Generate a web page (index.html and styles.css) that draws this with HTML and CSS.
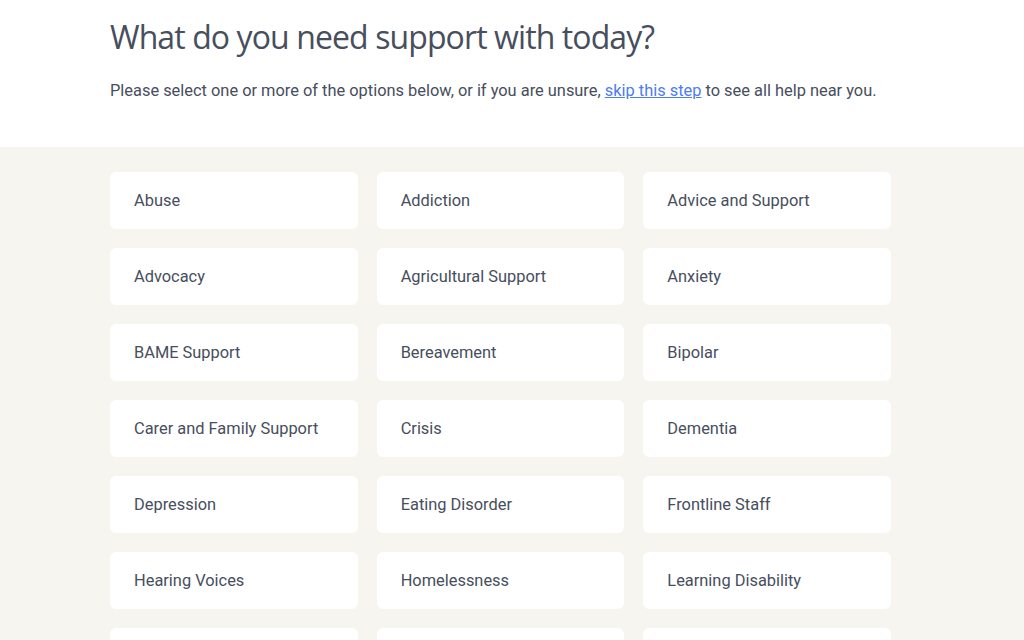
FILE: index.html
```html
<!DOCTYPE html>
<html lang="en">
<head>
  <meta charset="UTF-8">
  <meta name="viewport" content="width=device-width, initial-scale=1.0">
  <title>What do you need support with today?</title>
  <link rel="stylesheet" href="styles.css">
</head>
<body>
  <header class="intro">
    <div class="wrap">
      <h1>What do you need support with today?</h1>
      <p>Please select one or more of the options below, or if you are unsure, <a href="#">skip this step</a> to see all help near you.</p>
    </div>
  </header>
  <main class="options">
    <div class="wrap grid">
      <button class="option">Abuse</button>
      <button class="option">Addiction</button>
      <button class="option">Advice and Support</button>
      <button class="option">Advocacy</button>
      <button class="option">Agricultural Support</button>
      <button class="option">Anxiety</button>
      <button class="option">BAME Support</button>
      <button class="option">Bereavement</button>
      <button class="option">Bipolar</button>
      <button class="option">Carer and Family Support</button>
      <button class="option">Crisis</button>
      <button class="option">Dementia</button>
      <button class="option">Depression</button>
      <button class="option">Eating Disorder</button>
      <button class="option">Frontline Staff</button>
      <button class="option">Hearing Voices</button>
      <button class="option">Homelessness</button>
      <button class="option">Learning Disability</button>
      <button class="option">Loneliness</button>
      <button class="option">LGBTQ+</button>
      <button class="option">Mental Health</button>
    </div>
  </main>
</body>
</html>
```

FILE: styles.css
```css
body {
  margin: 0;
  font-family: Roboto, "Liberation Sans", sans-serif;
  color: #474e5d;
  background-color: #f7f5f0;
}

.wrap {
  width: 781px;
  margin-left: 110px;
}

.intro {
  background-color: #fff;
  padding: 14px 0 44px;
}

h1 {
  margin: 0;
  font-family: "Open Sans", sans-serif;
  font-weight: 400;
  font-size: 32px;
  line-height: 46px;
  letter-spacing: -0.9px;
  color: #474e5d;
}

.intro p {
  margin: 19px 0 0;
  font-size: 16.4px;
  line-height: 24px;
}

.intro a {
  color: #4d7cf3;
}

.options {
  padding: 25px 0 40px;
}

.grid {
  display: grid;
  grid-template-columns: repeat(3, 1fr);
  gap: 19px;
}

.option {
  height: 57px;
  padding: 0 24px;
  border: 0;
  border-radius: 6px;
  background-color: #fff;
  text-align: left;
  font-family: Roboto, "Liberation Sans", sans-serif;
  font-size: 16.4px;
  color: #474e5d;
  cursor: pointer;
}
```
